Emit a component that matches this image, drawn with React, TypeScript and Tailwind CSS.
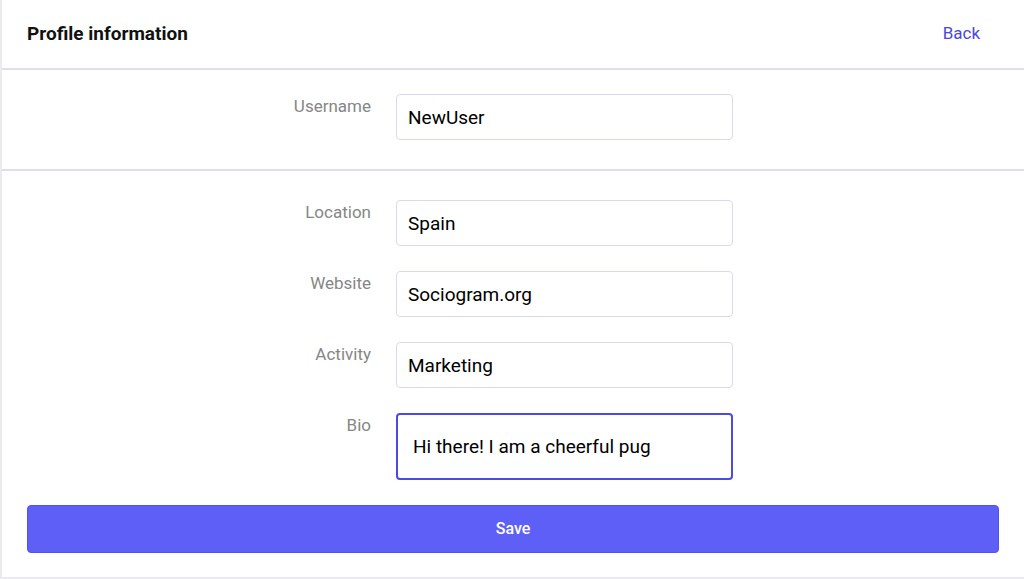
import React, { useState } from 'react';

type Field = { id: string; label: string; value: string };

const details: Field[] = [
  { id: 'location', label: 'Location', value: 'Spain' },
  { id: 'website', label: 'Website', value: 'Sociogram.org' },
  { id: 'activity', label: 'Activity', value: 'Marketing' },
];

function Row({ label, children }: { label: string; children: React.ReactNode }) {
  return (
    <div className="flex items-start gap-[25px]">
      <label className="w-[369px] shrink-0 text-right text-[17px] leading-6 text-[#868686]">
        {label}
      </label>
      {children}
    </div>
  );
}

export default function App() {
  const [username, setUsername] = useState('NewUser');
  const [values, setValues] = useState<Record<string, string>>(
    Object.fromEntries(details.map((f) => [f.id, f.value]))
  );
  const [bio, setBio] = useState('Hi there! I am a cheerful pug');

  const inputClass =
    'h-[46px] w-[337px] rounded-[4px] border border-[#dcd9ef] bg-white px-[11px] text-[19px] text-black outline-none';

  return (
    <div className="min-h-[579px] bg-[#ebebef] pl-[2px] pb-[2px] font-['Roboto',sans-serif]">
      <div className="bg-white">
        <header className="flex h-[70px] items-center justify-between border-b-2 border-[#e0ddf0] pl-[25px] pr-[44px]">
          <h1 className="text-[19px] font-bold text-[#111]">Profile information</h1>
          <button className="text-[17px] text-[#4a47e0]">Back</button>
        </header>

        <section className="border-b-2 border-[#e0ddf0] pt-[24px] pb-[29px]">
          <Row label="Username">
            <input
              className={inputClass}
              value={username}
              onChange={(e) => setUsername(e.target.value)}
            />
          </Row>
        </section>

        <section className="flex flex-col gap-[25px] px-[25px] pt-[29px] pb-[24px]">
          <div className="-mx-[25px] flex flex-col gap-[25px]">
            {details.map((f) => (
              <Row key={f.id} label={f.label}>
                <input
                  className={inputClass}
                  value={values[f.id]}
                  onChange={(e) => setValues({ ...values, [f.id]: e.target.value })}
                />
              </Row>
            ))}
            <Row label="Bio">
              <textarea
                className="h-[67px] w-[337px] resize-none rounded-[4px] border-2 border-[#4b4ae6] bg-white px-[15px] pt-[20px] text-[19px] leading-6 text-black outline-none"
                value={bio}
                onChange={(e) => setBio(e.target.value)}
              />
            </Row>
          </div>
          <button className="h-[48px] w-full rounded-[4px] border border-[#5052f2] bg-[#5d5ff6] text-[16px] font-medium text-white">
            Save
          </button>
        </section>
      </div>
    </div>
  );
}
